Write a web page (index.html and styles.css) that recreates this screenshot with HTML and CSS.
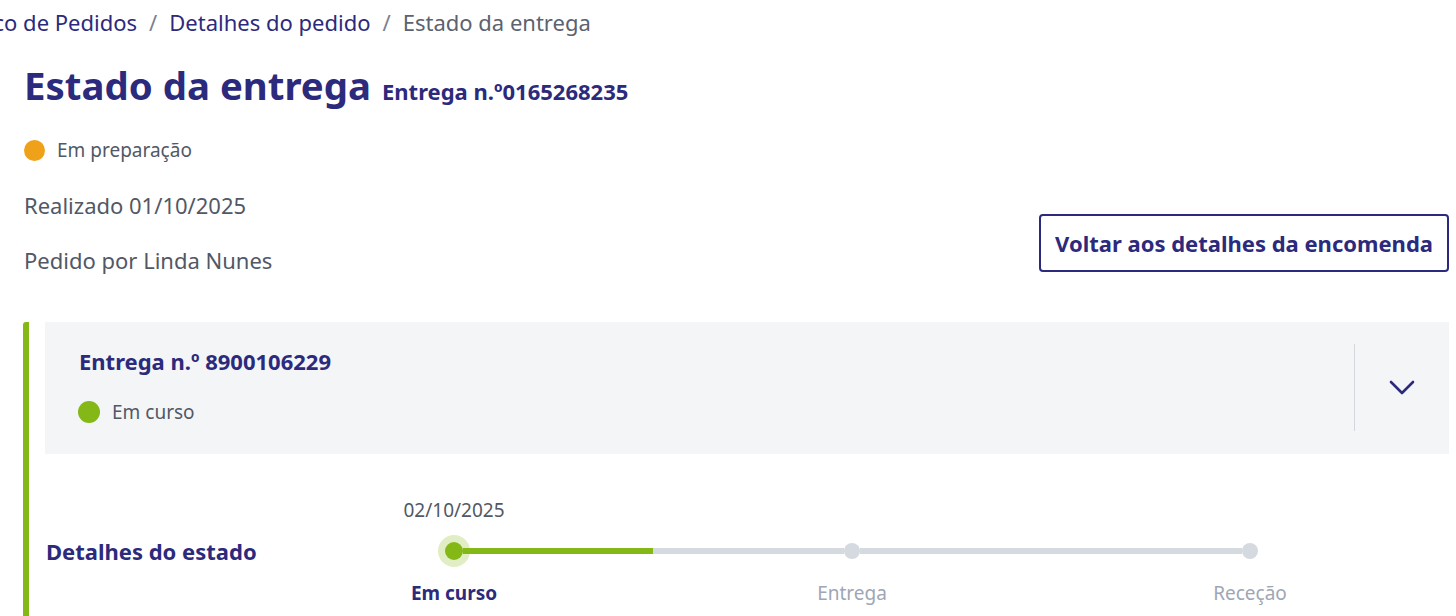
FILE: index.html
```html
<!DOCTYPE html>
<html lang="pt">
<head>
    <meta charset="UTF-8">
    <meta name="viewport" content="width=device-width, initial-scale=1.0">
    <title>Estado da entrega</title>
    <link rel="stylesheet" href="styles.css">
</head>
<body>

<nav class="breadcrumb">
    <a href="#">Histórico de Pedidos</a>
    <span class="sep">/</span>
    <a href="#">Detalhes do pedido</a>
    <span class="sep">/</span>
    <span class="current">Estado da entrega</span>
</nav>

<main class="page">
    <h1 class="page-title">Estado da entrega <span class="page-sub">Entrega n.º0165268235</span></h1>

    <div class="status">
        <span class="dot orange"></span>
        <span>Em preparação</span>
    </div>

    <div class="meta-row">
        <div class="meta">
            <p>Realizado 01/10/2025</p>
            <p>Pedido por Linda Nunes</p>
        </div>
        <a href="#" class="btn-outline">Voltar aos detalhes da encomenda</a>
    </div>

    <section class="delivery">
        <div class="delivery-card">
            <div class="delivery-info">
                <h2>Entrega n.º 8900106229</h2>
                <div class="status">
                    <span class="dot green"></span>
                    <span>Em curso</span>
                </div>
            </div>
            <button class="toggle" aria-label="Expandir">
                <svg width="26" height="16" viewBox="0 0 26 16" fill="none">
                    <path d="M2 3l11 11L24 3" stroke="#2c2a7c" stroke-width="2.6" stroke-linecap="round" stroke-linejoin="round"/>
                </svg>
            </button>
        </div>

        <div class="tracking">
            <div class="step-date col-2">02/10/2025</div>

            <div class="tracking-title">Detalhes do estado</div>
            <div class="track col-2">
                <span class="seg"></span>
                <span class="node active"></span>
                <span class="seg done"></span>
            </div>
            <div class="track col-3">
                <span class="seg todo"></span>
                <span class="node"></span>
                <span class="seg todo"></span>
            </div>
            <div class="track col-4">
                <span class="seg todo"></span>
                <span class="node"></span>
                <span class="seg"></span>
            </div>

            <div class="step-label active col-2">Em curso</div>
            <div class="step-label col-3">Entrega</div>
            <div class="step-label col-4">Receção</div>
        </div>
    </section>
</main>

</body>
</html>
```

FILE: styles.css
```css
body {
    margin: 0;
    font-family: "Noto Sans", "Open Sans", sans-serif;
    color: #515866;
    background: #fff;
    overflow: hidden;
}

a { text-decoration: none; }

.breadcrumb {
    display: flex;
    align-items: center;
    gap: 12px;
    margin-left: -75px;
    padding-top: 7px;
    font-size: 22px;
    line-height: 30px;
    white-space: nowrap;
}

.breadcrumb a { color: #2c2a7c; }
.breadcrumb .sep { color: #7a8190; }
.breadcrumb .current { color: #5b6270; }

.page {
    margin-left: 23px;
    width: 1426px;
}

.page-title {
    margin: 21px 0 0 1px;
    font-size: 38.4px;
    line-height: 54px;
    font-weight: 700;
    color: #2c2a7c;
}

.page-sub {
    margin-left: 1px;
    font-size: 22px;
}

.status {
    display: flex;
    align-items: center;
    gap: 12px;
    font-size: 19px;
    line-height: 28px;
}

.page > .status {
    margin: 18px 0 0 1px;
}

.dot {
    width: 21px;
    height: 21px;
    border-radius: 50%;
    flex-shrink: 0;
}

.orange { background: #f0a11a; }
.green { background: #84b817; }

.meta-row {
    display: flex;
    justify-content: space-between;
    align-items: flex-end;
    margin-top: 26px;
}

.meta {
    padding-left: 1px;
    font-size: 22px;
    line-height: 30px;
}

.meta p { margin: 0 0 25px; }
.meta p:last-child { margin: 0; }

.btn-outline {
    display: block;
    margin-bottom: 3px;
    padding: 12px 14px;
    border: 2px solid #2c2a7c;
    border-radius: 4px;
    color: #2c2a7c;
    font-size: 22px;
    line-height: 30px;
    font-weight: 700;
}

.delivery {
    margin-top: 47px;
    padding: 0 0 40px 16px;
    border-left: 6px solid #84b817;
    border-radius: 3px 0 0 0;
}

.delivery-card {
    display: flex;
    align-items: center;
    background: #f4f5f7;
    height: 132px;
}

.delivery-info {
    flex: 1;
    padding: 24px 0 0 34px;
    align-self: flex-start;
}

.delivery-info h2 {
    margin: 0 0 22px;
    font-size: 22px;
    line-height: 30px;
    font-weight: 700;
    color: #2c2a7c;
}

.delivery-info .dot {
    width: 22px;
    height: 22px;
    margin-left: -1px;
}

.toggle {
    width: 95px;
    height: 87px;
    border: 0;
    border-left: 1px solid #d3d6dd;
    background: none;
    display: flex;
    align-items: center;
    justify-content: center;
    padding: 0;
    margin-bottom: 2px;
}

.tracking {
    display: grid;
    grid-template-columns: 210px repeat(3, 398px);
    grid-template-rows: 30px 34px 32px;
    row-gap: 9px;
    margin-top: 41px;
    align-items: center;
}

.col-2 { grid-column: 2; }
.col-3 { grid-column: 3; }
.col-4 { grid-column: 4; }

.step-date {
    grid-row: 1;
    text-align: center;
    font-size: 19px;
}

.tracking-title {
    grid-column: 1;
    grid-row: 2;
    padding-left: 1px;
    font-size: 22px;
    font-weight: 700;
    white-space: nowrap;
    color: #2c2a7c;
}

.track {
    grid-row: 2;
    display: flex;
    align-items: center;
}

.seg {
    flex: 1;
    height: 6px;
}

.seg.done { background: #84b817; }
.seg.todo { background: #d5d9e0; }

.node {
    width: 16px;
    height: 16px;
    border-radius: 50%;
    background: #d5d9e0;
}

.node.active {
    width: 18px;
    height: 18px;
    background: #84b817;
    box-shadow: 0 0 0 7px #e1eec3;
}

.step-label {
    grid-row: 3;
    text-align: center;
    font-size: 19px;
    color: #9ea6b5;
}

.step-label.active {
    font-weight: 700;
    color: #2c2a7c;
}
```
